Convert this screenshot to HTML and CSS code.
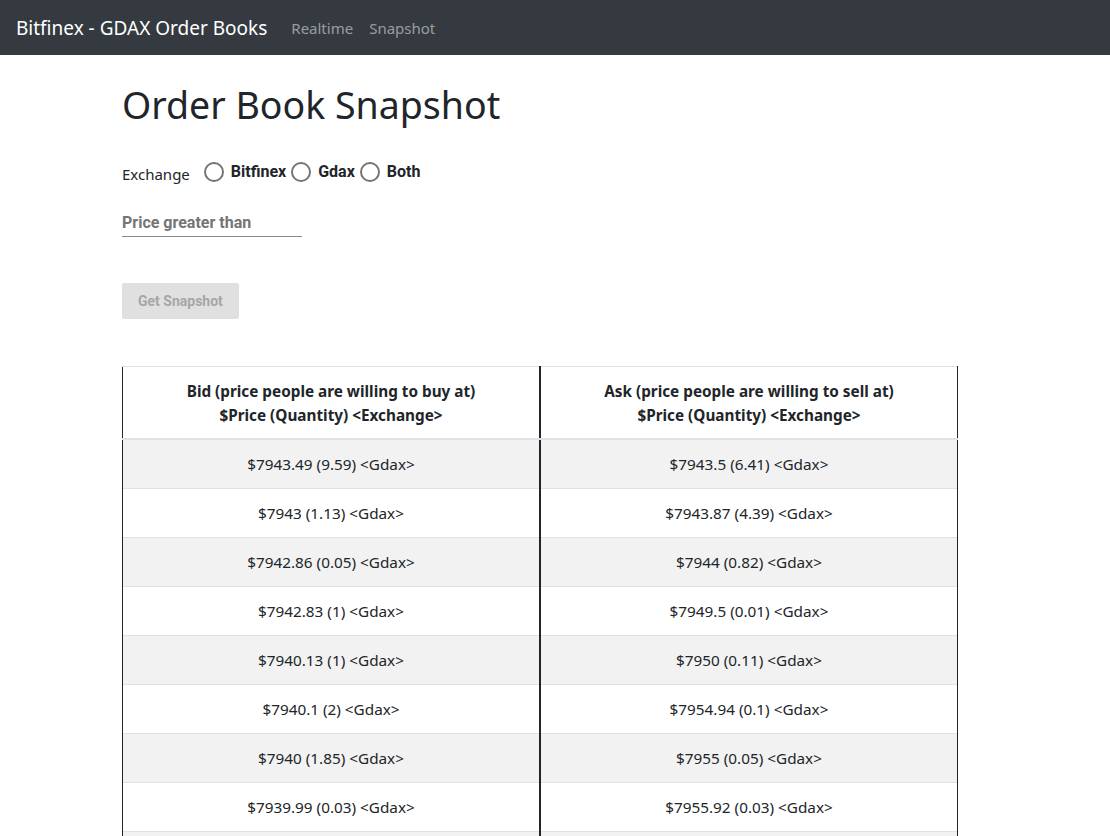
FILE: index.html
```html
<!DOCTYPE html>
<html>
<head>
<meta charset="utf-8">
<title>Bitfinex - GDAX Order Books</title>
<link rel="stylesheet" href="styles.css">
</head>
<body>
<nav class="navbar">
  <span class="brand">Bitfinex - GDAX Order Books</span>
  <a class="nav-link">Realtime</a>
  <a class="nav-link">Snapshot</a>
</nav>
<main class="container">
  <h1 class="title">Order Book Snapshot</h1>
  <div class="exchange-row">
    <span class="exchange-label">Exchange</span>
    <label class="radio">
      <svg width="24" height="24" viewBox="0 0 24 24"><circle cx="12" cy="12" r="9" fill="none" stroke="#757575" stroke-width="2"/></svg>
      <span class="radio-text">Bitfinex</span>
    </label>
    <label class="radio">
      <svg width="24" height="24" viewBox="0 0 24 24"><circle cx="12" cy="12" r="9" fill="none" stroke="#757575" stroke-width="2"/></svg>
      <span class="radio-text">Gdax</span>
    </label>
    <label class="radio">
      <svg width="24" height="24" viewBox="0 0 24 24"><circle cx="12" cy="12" r="9" fill="none" stroke="#757575" stroke-width="2"/></svg>
      <span class="radio-text">Both</span>
    </label>
  </div>
  <div class="field">
    <input class="price-input" type="text" placeholder="Price greater than">
  </div>
  <button class="snap-btn" disabled>Get Snapshot</button>
  <table class="book">
    <thead>
      <tr>
        <th>Bid (price people are willing to buy at)<br>$Price (Quantity) &lt;Exchange&gt;</th>
        <th>Ask (price people are willing to sell at)<br>$Price (Quantity) &lt;Exchange&gt;</th>
      </tr>
    </thead>
    <tbody>
      <tr><td>$7943.49 (9.59) &lt;Gdax&gt;</td><td>$7943.5 (6.41) &lt;Gdax&gt;</td></tr>
      <tr><td>$7943 (1.13) &lt;Gdax&gt;</td><td>$7943.87 (4.39) &lt;Gdax&gt;</td></tr>
      <tr><td>$7942.86 (0.05) &lt;Gdax&gt;</td><td>$7944 (0.82) &lt;Gdax&gt;</td></tr>
      <tr><td>$7942.83 (1) &lt;Gdax&gt;</td><td>$7949.5 (0.01) &lt;Gdax&gt;</td></tr>
      <tr><td>$7940.13 (1) &lt;Gdax&gt;</td><td>$7950 (0.11) &lt;Gdax&gt;</td></tr>
      <tr><td>$7940.1 (2) &lt;Gdax&gt;</td><td>$7954.94 (0.1) &lt;Gdax&gt;</td></tr>
      <tr><td>$7940 (1.85) &lt;Gdax&gt;</td><td>$7955 (0.05) &lt;Gdax&gt;</td></tr>
      <tr><td>$7939.99 (0.03) &lt;Gdax&gt;</td><td>$7955.92 (0.03) &lt;Gdax&gt;</td></tr>
      <tr class="partial"><td>&nbsp;</td><td>&nbsp;</td></tr>
    </tbody>
  </table>
</main>
</body>
</html>
```
FILE: styles.css
```css
* { box-sizing: border-box; }
html, body { margin: 0; padding: 0; }
body {
  font-family: "Noto Sans", "Open Sans", sans-serif;
  font-size: 15px;
  line-height: 24px;
  color: #212529;
  background: #fff;
}
.navbar {
  height: 55px;
  background: #343a40;
  display: flex;
  align-items: center;
  padding: 0 16px;
}
.brand {
  color: #fff;
  font-size: 19px;
  margin-right: 24px;
}
.nav-link {
  color: rgba(255,255,255,0.5);
  font-size: 15px;
  margin-right: 16px;
}
.container {
  width: 836px;
  margin-left: 122px;
  padding-top: 26px;
}
.title {
  font-size: 37.5px;
  font-weight: 400;
  line-height: 48px;
  margin: 0 0 19px 0;
}
.exchange-row {
  display: flex;
  align-items: center;
  height: 48px;
}
.exchange-label {
  margin-right: 12px;
  padding-top: 4px;
}
.radio {
  display: flex;
  align-items: center;
  margin-right: 3px;
}
.radio svg { display: block; }
.radio-text {
  font-family: Roboto, sans-serif;
  font-weight: 700;
  font-size: 16px;
  margin-left: 5px;
}
.field {
  margin-top: 6px;
  width: 180px;
  border-bottom: 1px solid #8a8a8a;
}
.price-input {
  border: 0;
  outline: 0;
  padding: 11px 0 4px;
  width: 100%;
  font-family: Roboto, sans-serif;
  font-size: 16px;
  font-weight: 700;
  line-height: 19px;
  background: transparent;
}
.price-input::placeholder {
  color: #757575;
  opacity: 1;
}
.snap-btn {
  display: block;
  margin-top: 46px;
  height: 36px;
  padding: 0 16px;
  border: 0;
  border-radius: 2px;
  background: #e0e0e0;
  color: #a6a6a6;
  font-family: Roboto, sans-serif;
  font-weight: 700;
  font-size: 14px;
}
.book {
  margin-top: 47px;
  width: 836px;
  border-collapse: collapse;
  table-layout: fixed;
}
.book th, .book td {
  text-align: center;
  padding: 12px;
  border-top: 1px solid #dee2e6;
  border-left: 1px solid #212529;
  border-right: 1px solid #212529;
}
.book th:first-child, .book td:first-child {
  border-right: 2px solid #212529;
}
.book th {
  font-weight: 700;
  font-size: 15.3px;
  border-bottom: 2px solid #dee2e6;
  padding: 12px 12px 11px;
}
.book td {
  font-size: 15.3px;
}
.book tbody tr:nth-child(odd) td {
  background: #f2f2f2;
}
```
